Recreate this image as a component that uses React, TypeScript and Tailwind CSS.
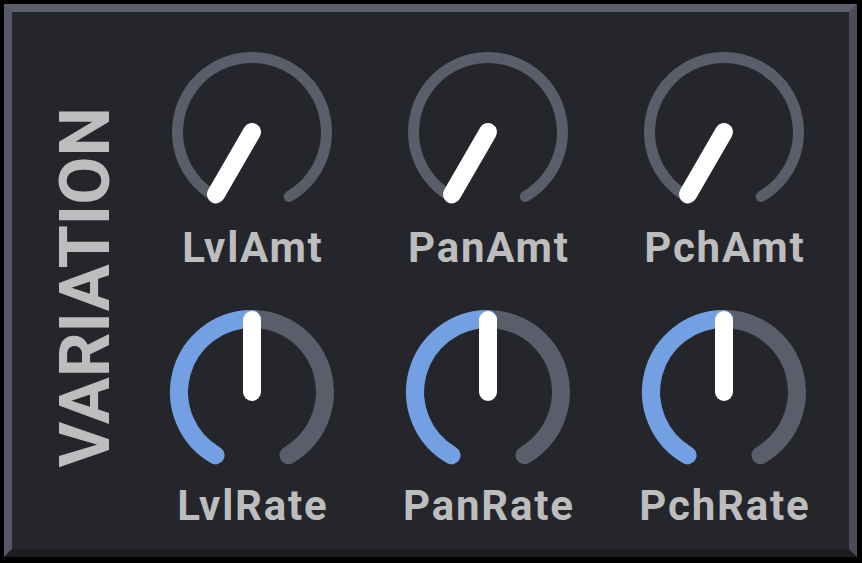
import React from "react";

type KnobProps = {
  label: string;
  value: number; // angle in degrees, clockwise from 12 o'clock
  track: number; // stroke width of the arc
  fill?: boolean;
  labelGap: string;
};

const SIZE = 176;
const C = SIZE / 2;

function polar(r: number, deg: number) {
  const a = (deg * Math.PI) / 180;
  return { x: C + r * Math.sin(a), y: C - r * Math.cos(a) };
}

function arc(r: number, from: number, to: number) {
  const s = polar(r, from);
  const e = polar(r, to);
  const large = to - from > 180 ? 1 : 0;
  return `M ${s.x} ${s.y} A ${r} ${r} 0 ${large} 1 ${e.x} ${e.y}`;
}

function Knob({ label, value, track, fill, labelGap }: KnobProps) {
  const r = track > 14 ? 73 : 74.5;
  const tip = polar(72, value);
  return (
    <div className="flex flex-col items-center">
      <svg width={SIZE} height={SIZE} viewBox={`0 0 ${SIZE} ${SIZE}`}>
        <path
          d={arc(r, -150, 150)}
          fill="none"
          stroke="#5a5d6a"
          strokeWidth={track}
          strokeLinecap="round"
        />
        {fill && (
          <path
            d={arc(r, -150, value)}
            fill="none"
            stroke="#72a0e2"
            strokeWidth={track}
            strokeLinecap="round"
          />
        )}
        <line
          x1={C}
          y1={C}
          x2={tip.x}
          y2={tip.y}
          stroke="#ffffff"
          strokeWidth={18}
          strokeLinecap="round"
        />
      </svg>
      <div
        className={`${labelGap} pl-[1.8px] font-['Roboto',sans-serif] text-[42px] leading-[42px] font-bold tracking-[1.8px] text-[#bdbdbd]`}
      >
        {label}
      </div>
    </div>
  );
}

export default function App() {
  return (
    <div className="w-[862px] h-[563px] bg-black pt-[4px] pl-[4px] pr-[5px] pb-[6px]">
      <div className="w-full h-full border-[8px] border-t-[#5c5e6c] border-l-[#555766] border-r-[#4a4c58] border-b-[#1c1d21] bg-[#25262c] flex">
        <div className="w-[122px] shrink-0 flex items-center justify-center pl-[24px] pt-[14px]">
          <span className="[writing-mode:vertical-rl] rotate-180 font-['Roboto',sans-serif] text-[70px] leading-[50px] font-bold text-[#bdbdbd]">
            VARIATION
          </span>
        </div>
        <div className="grid grid-cols-[236px_236px_236px] pt-[32px] gap-y-[35px] content-start">
          <Knob label="LvlAmt" value={-150} track={11} labelGap="mt-[7px]" />
          <Knob label="PanAmt" value={-150} track={11} labelGap="mt-[7px]" />
          <Knob label="PchAmt" value={-150} track={11} labelGap="mt-[7px]" />
          <Knob label="LvlRate" value={0} track={18} fill labelGap="mt-[5px]" />
          <Knob label="PanRate" value={0} track={18} fill labelGap="mt-[5px]" />
          <Knob label="PchRate" value={0} track={18} fill labelGap="mt-[5px]" />
        </div>
      </div>
    </div>
  );
}
